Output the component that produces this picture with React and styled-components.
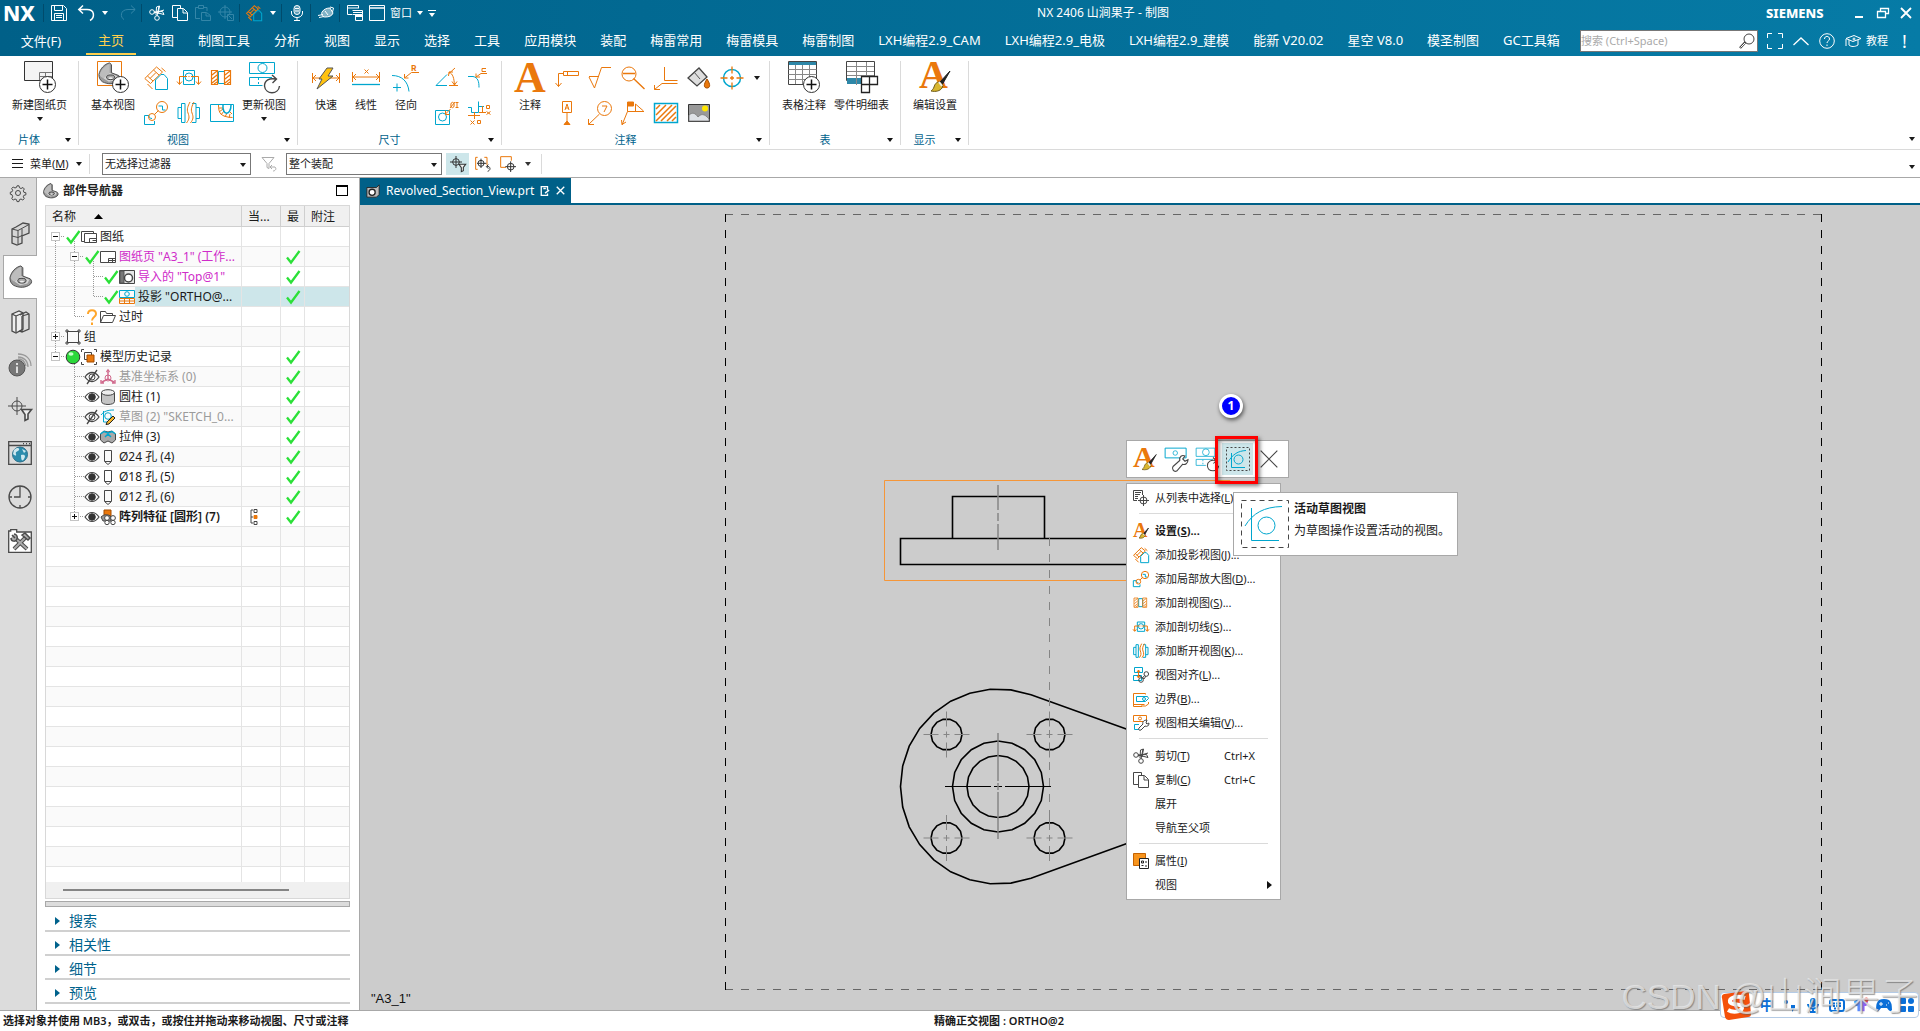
import React from 'react';
import styled, { createGlobalStyle, css } from 'styled-components';

const O = '#ea780c';
const B = '#00a6ce';
const D = '#464646';

const GlobalStyle = createGlobalStyle`
  * {
    box-sizing: border-box;
  }

  html,
  body,
  #root {
    height: 100%;
    margin: 0;
  }

  body {
    background: #fff;
    color: #1a1a1a;
    font: 11px/16px "Noto Sans", "Noto Sans CJK SC", sans-serif;
    overflow: hidden;
  }

  button,
  input,
  select {
    font: inherit;
    color: inherit;
    margin: 0;
  }

  button {
    background: none;
    border: 0;
    padding: 0;
  }

  svg {
    display: block;
    flex: none;
    overflow: visible;
  }
`;

const Brush = () => (
  <>
    <path d="M31 10L21 21l2 3z" fill="#222" stroke="#222" />
    <path d="M21 21c-4 0-5 2-6 5-.5 2-2 3-3 4 5 1 9 0 11-3l1-3z" fill="#d9b72f" stroke="#6d5a18" />
    <path d="M20 21l3 4" stroke="#eee" strokeWidth="2" />
  </>
);

const Letter = ({ x, y, size, children }) => (
  <text x={x} y={y} fontSize={size} fill={O} stroke="none" fontFamily="Liberation Serif, serif" fontWeight="bold">{children}</text>
);

const PlusDisc = () => (
  <>
    <circle cx="23.5" cy="23.5" r="8" fill="#fff" stroke="#333" />
    <path d="M23.5 18.5v10M18.5 23.5h10" stroke="#111" strokeWidth="1.5" />
  </>
);

const Part = () => (
  <>
    <path d="M1 14C2 8 7 2 13 1l2 2v9l8 3c2 2 2 4 0 6-5 4-12 4-18 1-3-2-4-5-4-8z" fill="#9a9a9a" stroke="#444" />
    <path d="M2 13.500C3.500 8.500 8 4 13 2v10l-7 6c-2-1-4-2-4-4.500z" fill="#bdbdbd" stroke="none" />
    <path d="M6 18l7-6 9 4-2 4-8 2z" fill="#d4d4d4" stroke="none" />
    <ellipse cx="14" cy="17" rx="4.500" ry="2.600" fill="#a8a8a8" stroke="#333" />
    <ellipse cx="14" cy="18" rx="2.300" ry="1" fill="#eee" stroke="none" />
  </>
);

// Each drawing is [grid size, shapes]
const glyphs = {
  save: [16, <path d="M.5.5h12l3 3v12H.5zM3.5 1v4.5h8V1M3.5 15V8.5h9V15M5 10.5h6M5 12.5h6" />],
  undo: [16, <path d="M5 .5L.8 4.5 5 8.500M1 4.5h8c8 0 8 8 3 11" strokeWidth="1.5" />],
  redo: [16, <path d="M11 .5l4.200 4L11 8.5M15 4.5H8c-8 0-8 8-4 10" />],
  cut: [16, <><circle cx="3" cy="7" r="2.3" /><circle cx="8" cy="13" r="2.3" /><path d="M5 8l10-3M8 11l2-10M5 7l10 2.500-1.500-3zM7 10L7.500 2l3-1-1.500 8" /></>],
  copy: [16, <path d="M5 12.500H.5V.5h8V3M5.5 3.5h6l4 4v8h-10zM11 4v4h4" />],
  paste: [16, <path d="M5 13.5H.5v-11h3M9 2.5h3V6M3.5.5h5v3h-5zM6.500 7.5h5l4 3v5h-9zM11 8v3h4" />],
  locate: [16, <><circle cx="7" cy="7" r="5" /><path d="M7 0v14M0 7h14M9.500 9.500h6v6h-6zM11 11l3 3" /></>],
  mic: [16, <><rect x="5" y=".5" width="6" height="9" rx="3" fill="currentColor" fillOpacity=".35" /><path d="M2.500 6v2c0 6 11 6 11 0V6M8 12.5V16M5 15.5h6M6 3.5h4M6 6h4" /></>],
  hand: [16, <><path d="M4 7c2-3 5-4 8-4l3 5c-1 3-4 4-8 4-3 0-4-3-3-5z" fill="currentColor" fillOpacity=".5" /><path d="M0 10.5l5-1M1 12.5l5-1M12 2l3.500 1-1 4M7 6l3 4" /></>],
  windows: [16, <><path d="M5 9.5H.5v-9h11v3M1 3h10M5.500 5.5h10v4M9 9.500h-3.500M6 7.500h9M8.500 15.5v-6h7v6z" /><path d="M9 11h6" strokeWidth="2" /></>],
  window: [16, <><path d="M.5.5h15v15H.5z" /><path d="M.5 3h15" strokeWidth="1.5" /></>],
  full: [16, <path d="M5 .5H.5V5M11 .5h4.500V5M5 15.5H.5V11M11 15.5h4.500V11" />],
  up: [16, <path d="M.5 12L8 5l7.500 7" strokeWidth="1.3" />],
  help: [16, <><circle cx="8" cy="8" r="7.3" /><path d="M5.500 6c0-3.500 5-3.500 5 0 0 2-2.500 2-2.500 4M8 11.5v1.500" /></>],
  cap: [16, <><path d="M1 5.500l8-3 7 3-8 3zM4 7v5c2 2 6 2 9 0V7M1 6v5M0 12h2" /><circle cx="9" cy="6" r="1" /></>],
  glass: [16, <><circle cx="10" cy="6" r="5" fill="#fff" stroke="#444" /><path d="M6.500 9L1 15" stroke="#444" strokeWidth="2.5" /><path d="M6 10l-4.500 4.500" stroke="#fff" /></>],
  min: [12, <path d="M2 10h8" strokeWidth="2" />],
  restore: [12, <path d="M3.500 4V1.500h8v5H9M.5 4.500h8v6h-8z" strokeWidth="1.3" />],
  close: [12, <path d="M1 1l10 10M11 1L1 11" strokeWidth="1.8" />],

  newSheet: [32, <><path d="M.5.5h28v19H.5z" fill="#f4f4f4" stroke="#333" /><path d="M15.500 19v-7.500H28M16 15.500h12M21.500 12v7" stroke="#777" /><PlusDisc /></>],
  baseView: [32, <><path d="M.5.5h24v24H.5z" stroke={O} /><g transform="translate(1 1) scale(.9)"><Part /></g><PlusDisc /></>],
  projected: [24, <><path stroke={O} d="M.8 12.500L12.500 1l6 5L6.500 17.500zM3.500 10l5.500 5M9.500 4l5.500 5M6 12.500l6-6M3.500 18l5 5M17.500 2l4 3.500" /><path stroke={B} d="M11.500 23.500V14L17 8.500h3l3.500 4v11z" /></>],
  cutLine: [24, <><path stroke={B} d="M6.500 4.500h11v14h-11z" /><circle cx="12" cy="11" r="4" stroke={B} /><path stroke={O} d="M2.500 18v-7.500H10M14 10.500h7.500V18M11.500 10.500h1M0 15.500l2.500 3 2.500-3M19 15.500l2.500 3 2.500-3" /></>],
  section: [24, <><path stroke={B} d="M8.500 5.500h6v12h-6z" /><path stroke={O} strokeWidth="1.2" d="M1.500 4.500h6v14h-6zM14.500 4.500h6v14h-6zM2 9l5-4M2 13l5-4M2 17l5-4M15 9l5-4M15 13l5-4M15 17l5-4M4 18l3-2M17 18l3-2" /></>],
  detail: [24, <><path stroke={B} d="M5 14.500H.5v9h10V20M5 14.500c0 2 1 3 3 3M14.500 5h4v4h3" /><circle cx="18" cy="6" r="5.5" stroke={O} /><circle cx="8" cy="16" r="3.5" stroke={O} /><path stroke={O} d="M10.500 13.500l4-4" /></>],
  broken: [24, <><path stroke={B} d="M4.500 6.500H1v11h3.500M4.500 2.500h3.500v19H4.500zM19 6.500h3.500v11H19M15 2.500h4v19h-4" /><path stroke={O} d="M9.500 22c3-4 3-6 1.500-10s0-7 2-11M13.500 22c3-4 3-6 1.500-10s0-7 2-11" /></>],
  breakout: [24, <><path stroke={B} d="M.5 3.500h23v17H.5z" /><path stroke={O} d="M8.500 4c0 8 2 12 14 12.500M9 7l4 0M9 11l4-3M11 14l3-4M15 16l2-4M19 17l1-4M22 13l-2-2" /><path stroke={B} strokeWidth="1.5" d="M13 4c-1 11 8 11 8 0" /></>],
  update: [32, <><path stroke={B} d="M1.500 1.500h25v11h-25zM24 16.500H1.500v8h13M10.500 17v2M10.500 21v2" /><circle cx="14.500" cy="7" r="4.5" stroke={B} /><path stroke={D} d="M31.500 25c-1 9-14 9-15 0 0-6 5-8 11-7M24 14l4.500 4-4 4" strokeWidth="1.4" /></>],
  quick: [32, <><path stroke={O} d="M2.500 12v10M29.500 12v10M3 17h26M6 14l-3 3 3 3M26 14l3 3-3 3" /><path d="M17 7h6l-5 8h5L7 28l5-10H9z" fill="#ffc20e" stroke="#555" /></>],
  linear: [32, <><path stroke={O} d="M2.500 11v10M29.500 11v10M3 16h26M6 13l-3 3 3 3M26 13l3 3-3 3M14.500 8.500l4 4M18.500 8.500l-4 4" /><path stroke={B} d="M2 23.500h28" strokeWidth="1.3" /></>],
  radial: [32, <><path stroke={O} d="M29 11.500h-7.500L14.500 17M14.500 13v4h4" /><text x="21" y="10" fontSize="9" fontFamily="Liberation Mono, monospace" fill={O} stroke="none" fontWeight="bold">R</text><path stroke={B} d="M2 14.500c10 0 16 6 17 16M3 26.500h8M7 22.500v8" /></>],
  angular: [24, <><path stroke={B} d="M12 8.500L1 19.500h11" /><path stroke={O} d="M14 7.500L20 2M14 19.500h9M14 6c4 2 5 6 5.500 13M13.500 10l.5-4h4M17 15.500l2.500 3.500 2.500-3.500" /></>],
  chamfer: [24, <><path stroke={B} d="M0 10.500h5c5 1 6 5 6 11" /><path stroke={O} d="M19 7.500h-6L8 11M8 7.500V11h4M18 2.500h-4v3h4" /></>],
  callout: [24, <><path stroke={B} d="M.5 9.500h14v14H.5z" /><circle cx="7.500" cy="16" r="4" stroke={B} /><path stroke={O} d="M15.500 8l-5 5M10.500 9.500v4h4M15 7l5-6M20.500 1.500h3M20.500 6.500h3M22 2v4" /><ellipse cx="17.500" cy="4" rx="1.7" ry="2.7" stroke={O} /></>],
  ordinate: [24, <><path stroke={B} d="M0 6.500h3.500v5h7v-11M10.500 5.500H16" /><path stroke={O} d="M11 11.500h7M14.500 5v7M18.500 4.500h3v3h-3zM18.500 10.500l4 3M22.500 10.500l-4 3M0 14.500h12M6.500 11v7M2.500 19.500l4 4M6.500 19.500l-4 4M9.500 19.500h3v3h-3z" /></>],
  note: [32, <Letter x="0" y="31" size={44}>A</Letter>],
  leader: [24, <path stroke={O} d="M8.500 5.500h15v4h-15zM12.500 6v3M8 7.500H3.500v13M.5 17l3 3.500 3-3.500" />],
  surface: [24, <path stroke={O} d="M1 10.500h10M1 11l5.500 11L13.500 1.500H23" />],
  zoomNote: [24, <><circle cx="8" cy="8" r="7" stroke={O} /><path stroke={O} d="M2 7.500h12M12.500 12.500L23.500 23" strokeWidth="1.4" /></>],
  axis: [24, <path stroke={O} d="M10.500 1v13.500h13M23.500 17.500H8L.5 23.500M.5 19v4.500H6" />],
  bucket: [24, <><path d="M12 2l8 9-10 9L1 12z" fill="#ddd" stroke="#444" strokeWidth="1.3" /><path d="M7 6l6 7" stroke="#555" /><path d="M20 13c-4 6-3 9 0 9s4-3 0-9z" fill={O} stroke="#a34c00" /></>],
  centerMark: [24, <><circle cx="12" cy="12" r="8.5" stroke={B} strokeWidth="1.5" /><path stroke={O} d="M12 .5v7M12 16.500v7M.5 12h7M16.500 12h7M12 10v4M10 12h4" strokeWidth="1.3" /></>],
  datum: [24, <><path stroke={O} d="M7.500.5h9v11h-9zM12 12v8" /><path stroke={O} fill={O} d="M12 20l-3 3.500h6z" /><path stroke={O} d="M10 9l2-6 2 6M10.500 7h3" /></>],
  balloon: [24, <><circle cx="16.500" cy="7.500" r="7" stroke={O} /><path stroke={O} d="M11.500 13L.5 23.500M.5 18v5.500H6M14 5h5l-3 6" /></>],
  weld: [24, <><path stroke={O} d="M1 24l5.500-13.500H23M6.500 10.500V1M.5 19l.5 4.500 4-2.500M14.500 10V3l8 7" /><path fill={O} stroke={O} d="M6.500 1h6v4h-6z" /></>],
  hatch: [24, <><path stroke={B} d="M.5 2.500h23v19H.5z" strokeWidth="1.5" /><path stroke={O} d="M2 8l4-4M2 14L12 4M2 20L18 4M7 20L22 5M13 20l9-9M18 20l4-4" strokeWidth="1.5" /></>],
  image: [24, <><path d="M1.500 3.500h21v17h-21z" fill="#999" stroke="#333" /><path d="M2 20v-6c4-3 6-2 9 2 3-3 6-4 11 2v2z" fill="#dfe2e6" stroke="#777" strokeWidth=".8" /><circle cx="18" cy="7.500" r="3" fill="#ffe600" stroke="none" /></>],
  tableNote: [32, <><path d="M.5.5h28v23H.5z" fill="#fff" stroke="#444" /><path d="M1 1h27v3H1z" fill="#2d87a8" stroke="none" /><path d="M.5 8.500h28M.5 13.500h28M.5 18.500h28M7.500 4v19M14.500 4v19M21.500 4v19" stroke="#888" /><PlusDisc /></>],
  partsList: [32, <><path d="M.5.5h28v19H.5z" fill="#fff" stroke="#444" /><path d="M1 17h15v6H1z" fill="#2d87a8" stroke="none" /><path d="M1 5.500h27M1 10.500h27M1 14.500h27M10.500 1v23M20.500 1v14" stroke="#888" /><path d="M15.500 15.500h16v8h-16zM23.500 15.500v16h-8v-16" fill="#fff" stroke="#222" strokeWidth="1.3" /></>],
  editSettings: [32, <><Letter x="0" y="27" size={40}>A</Letter><Brush /></>],
  editView: [32, <><path stroke={B} d="M1.500 1.500h28v13h-28z" strokeWidth="1.3" /><circle cx="15" cy="8" r="3" stroke={B} /><path d="M12 26l9-8c-1-5 3-8 7-6l-3 4 3 3 4-2c0 5-4 7-7 6l-8 9c-4 2-7-3-5-6z" fill="#fff" stroke={D} strokeWidth="1.5" /></>],
  cross: [24, <path d="M2 2l20 20M22 2L2 22" stroke={D} strokeWidth="1.4" />],
  activeView: [24, <><path d="M.5.5h23v23H.5z" stroke={D} strokeDasharray="2 2" /><path stroke={B} d="M5.500 6v14.500H19M2 15C7 7 12 4 20 3.500" /><circle cx="12.500" cy="12.500" r="4.5" stroke={B} /></>],
  activeViewLarge: [48, <><path d="M.5.5h47v47H.5z" stroke={D} strokeDasharray="5 4" /><path stroke={B} d="M10.500 8v32.500H38M4 26C12 13 23 7 41 6.500" /><circle cx="25.500" cy="25.500" r="8.5" stroke={B} /></>],

  filterReset: [16, <><path d="M1 1.500h12l-5 6v5l-2-1v-4z" /><path d="M9 11h5c2 2 0 4-2 4M11 9l-2 2 2 2" /></>],
  targetFilter: [24, <><circle cx="9" cy="9" r="5" /><path d="M9 0v18M0 9h18" /><path d="M13.500 12.500h10l-3.500 4.500v5l-3 1.500v-6z" fill="#eee" strokeWidth="1.6" /></>],
  targetBracket: [24, <><path stroke={O} strokeWidth="1.5" d="M4 2H1v18h3M14 2h4v12" /><circle cx="9" cy="11" r="4.5" /><path d="M9 4v14M3 11h14M18 16h3c3 3 1 6-2 7M20 13l-3 3 3 3" strokeWidth="1.5" /></>],
  targetSquare: [24, <><path stroke={O} strokeWidth="1.5" d="M9 17H1V1h16v6" /><circle cx="16" cy="16" r="5" strokeWidth="1.5" /><path d="M16 8v16M8 16h16" strokeWidth="1.5" /></>],
  list: [16, <><path d="M4 10.500H.5V.5h9V5M2 2.500h6M2 4.500h5M2 6.500h3M2 8.500h3" /><circle cx="10.500" cy="10.500" r="3.5" /><path d="M10.500 5v11M5 10.500h11" /></>],
  align: [16, <><path stroke={B} d="M1.500.5h8v5h-8zM.5 8.500h8v5h-8z" /><path stroke={O} d="M5.500 3v8M4 5l1.500-2L7 5M4 9l1.500 2L7 9" /><circle cx="8" cy="13" r="2.3" /><circle cx="13.300" cy="7" r="2.3" /><path d="M9.500 11l2-2.500M6 8l5 4 2-3" /></>],
  border: [16, <><path stroke={O} d="M9 15.500H.5V2.500h12v1M15.500 11v2l-3 2H8M.5 13.500h11" /><path stroke={B} d="M3.500 5.500h11l1 2-3 3h-9z" /><circle cx="11" cy="8" r="1.5" stroke={B} /></>],
  viewEdit: [16, <><path stroke={O} d="M.5.5h13v6H.5z" /><circle cx="7" cy="3.500" r="1.5" stroke={O} /><path stroke={B} d="M6 9.500H1.500v5H6" /><path d="M6 13l4-4c-1-2 1-4 4-4l-1 3 1 1 2-1c0 3-2 4-4 3l-4 4c-2 1-3-1-2-2z" fill="#fff" /></>],
  props: [16, <><path d="M.5.5h12v12H.5z" fill="#f7941d" stroke="#c56200" /><path d="M6.500 5.500h9v10h-9z" fill="#fff" stroke="#222" /><path d="M8.500 8h2v2h-2zM12 9h2M8.500 12.500h2M12 13h2" stroke="#222" /></>],

  gear: [16, <><path d="M7 .8h2l.5 2 1.500.7 2-1 1.300 1.500-1 1.800.6 1.500 2 .5v2l-2 .5-.6 1.500 1 1.800-1.500 1.400-1.800-1-1.500.6-.5 2H7l-.5-2-1.500-.6-1.800 1-1.500-1.400 1-1.800L2 9.700l-1.700-.5v-2L2 6.800l.7-1.500-1-1.800L3.200 2l1.800 1 1.500-.6z" /><circle cx="8" cy="8" r="2.5" /></>],
  cubes: [24, <><path d="M4 8l4-2 7-4 6 1v9l-7 3v7l-5 2-5-2z" fill="#d5d5d5" strokeWidth="1.3" /><path d="M4 8l6 1.500 11-6M10 9.500V23M4 15l6 1.500 4-2M14 8v7" /></>],
  part: [26, <Part />],
  books: [24, <><path d="M4 5l7-3 4 2v16l-7 4-4-2z" fill="#eee" strokeWidth="1.3" /><path d="M8 7l7-3M8 7v16M4 5l4 2M12 6l6-3 3 2v15l-7 3-3-1M14 7l7-2M14 7v16" fill="none" strokeWidth="1.3" /></>],
  info: [24, <><circle cx="9" cy="15" r="8" fill="#777" stroke="#555" /><path d="M9 13.500V20M9 10v2" stroke="#fff" strokeWidth="1.5" /><path d="M10 4c6 0 10 4 10 10M10 1c8 0 13 5 13 12M10 6c4 0 7 3 8 7" stroke="#999" strokeWidth="1.3" /></>],
  globe: [24, <><path d="M.7.7h22.600v22.600H.7zM1 4.500h22M15 2.700h1M18 2.700h1M21 2.700h1" strokeWidth="1.3" /><circle cx="12" cy="13.500" r="7.5" fill="#2b8cad" stroke="#2b6f8a" /><path d="M6 9c3-3 6-2 5 0s-4 1-3 4-2 1-3 0zM13 14c4-1 5 1 3 4s-3 1-3-4zM14 8l4 2-2 2z" fill="#cde8f0" stroke="none" /></>],
  clock: [24, <><circle cx="12" cy="12" r="11" strokeWidth="1.3" /><path d="M12 4v8H6M12 1v3M12 20v3M1 12h3M20 12h3" strokeWidth="1.3" /></>],
  tools: [24, <><path d="M.7 23.300V2h2V.7h6V3h14.600v20.300z" fill="#fff" strokeWidth="1.3" /><path d="M7 9l12 11M18 8L6 20" strokeWidth="4" /><path d="M7 9l12 11M18 8L6 20" stroke="#aaa" strokeWidth="2" /><path d="M4 6l3 3M3 9c0 4 5 4 6 1s-1-5-3-5M14 6l3-2 5 5-2 2z" strokeWidth="1.5" fill="#aaa" /></>],

  check: [16, <path d="M2 8.500l4 5L14.500 2" stroke="#2be038" strokeWidth="2.3" />],
  question: [16, <path d="M4 5c0-5 8-5 8 0 0 3-4 3-4 6.500M8 13.500V16" stroke="#ffa62b" strokeWidth="2" />],
  ball: [16, <><circle cx="8" cy="8" r="6.8" fill="#2bd83a" stroke="#333" /><ellipse cx="6" cy="5" rx="2.5" ry="1.8" fill="#c6ffca" stroke="none" /></>],
  eye: [16, <><path d="M1 8c4-6 10-6 14 0-4 6-10 6-14 0z" strokeWidth="1.2" /><circle cx="8" cy="8" r="3.3" fill="#333" stroke="#333" /></>],
  eyeOff: [16, <><path d="M1 8c4-6 10-6 14 0-4 6-10 6-14 0zM13 1L3 15" strokeWidth="1.3" /><circle cx="8" cy="8" r="3" /></>],
  sheets: [16, <><path d="M3 12.500H.5v-10h12V5" /><path d="M3.500 4.500h12v9h-12zM8.500 13v-3.500h6.500M11.500 11.500h4" /></>],
  sheet: [16, <path d="M.5 2.500h15v11H.5zM8.500 13V9.500H15M9 11.500h6M12.500 10v3" fill="#fff" />],
  topView: [16, <><path d="M.5 1.500h15v13H.5z" fill="#e6e6e6" /><path d="M1 2h4v12H1z" fill="#777" stroke="#555" /><circle cx="9.500" cy="9" r="4" fill="#fff" strokeWidth="1.5" /></>],
  ortho: [16, <><path stroke={B} d="M.5 1.500h15v7H.5z" /><circle cx="8" cy="5" r="2.3" stroke={B} /><path stroke={O} d="M.5 9.500h15v5H.5zM5.500 10v4M10.500 10v4M1 12h14" /></>],
  folder: [16, <path d="M.5 13.500v-11h5l1 2h6v2M.5 13.500l3-7h12l-3 7z" />],
  group: [16, <><path d="M2.500 2.500h11v11h-11z" /><path d="M1 1h2v2H1zM13 1h2v2h-2zM1 13h2v2H1zM13 13h2v2h-2z" /></>],
  history: [16, <><path d="M.5 3V.5H3M13 .5h2.500V3M.5 13v2.500H3M13 15.500h2.500V13" /><path d="M3.500 3.500h7v7h-7z" fill="#fff" /><path d="M6 6h7v7H6z" fill={O} stroke="#a34c00" /></>],
  csys: [16, <><path stroke="#d0698c" d="M8 3v7l-6 3M8 10l6 3M6.500 3L8 1l1.500 2M1 11v3h3M12 14h3v-3" strokeWidth="1.4" /><circle cx="8" cy="9" r="3" stroke="#d0698c" /></>],
  cylinder: [16, <><path d="M1.500 3.500v9c0 4 13 4 13 0v-9" fill="#c4c4c4" /><ellipse cx="8" cy="3.500" rx="6.5" ry="2.8" fill="#eee" /></>],
  sketch: [16, <><path stroke={B} d="M3.500 2v11H9M1 6C4 2 8 1 14 1" /><circle cx="8" cy="7" r="3.3" stroke={B} /><path d="M7 13l6-6 2 2-6 6-3 .5z" fill="#f3b32c" stroke="#222" /></>],
  extrude: [16, <><path d="M.5 5L4 2l4 1 4-1 3.500 3v6L12 14l-4-2-4 2-3.500-3z" fill="#a9a9a9" /><path stroke={B} d="M.5 5L4 2.500 8 4l4-1.500L15.500 5M5 8l3-3 3 3" strokeWidth="1.5" /></>],
  hole: [16, <path d="M4.500 1.500h7v11l-3.500 3-3.500-3zM5 12.500h6" />],
  pattern: [16, <><path d="M4 1h7v6H4z" fill={O} stroke="#a34c00" /><path d="M1 8c3-3 8-3 10 0v4H3z" fill="#999" /><circle cx="7" cy="9" r="2.4" fill="#fff" /><circle cx="13" cy="9" r="2.4" fill="#fff" /><circle cx="7" cy="13.500" r="2.2" fill="#fff" /><circle cx="13" cy="13.500" r="2.2" fill="#fff" /></>],
  tree: [16, <><path d="M5 1H3v13h2M3 8h2" /><path d="M6 .5h3v3H6zM6 12.500h3v3H6z" /><path d="M6 6.500h3v3H6z" fill={O} stroke={O} /></>],
  tabPart: [16, <><path d="M1 4h11l3-3v11l-3 3H1z" fill="#bbb" stroke="#222" /><circle cx="7" cy="9.500" r="3.5" fill="#fff" stroke="#222" strokeWidth="1.5" /></>],
  modified: [12, <path d="M9 5V.8H1.500v10.500H9V9M4 3h3M11 5L6 8.500" strokeWidth="1.6" />],
};

const Icon = ({ name, size, ...rest }) => {
  const [grid, shapes] = glyphs[name];
  const px = size || grid;
  return (
    <svg width={px} height={px} viewBox={`0 0 ${grid} ${grid}`} fill="none" stroke="currentColor" aria-hidden="true" {...rest}>
      {shapes}
    </svg>
  );
};

const Caret = () => (
  <svg width="6" height="4" viewBox="0 0 6 4" fill="currentColor" aria-hidden="true"><path d="M0 0h6L3 4z" /></svg>
);

const App = () => (
  <>
    <GlobalStyle />
    <Shell>
      <Header>
        <TitleRow>
          <QuickAccess />
          <Title>NX 2406 山涧果子 - 制图</Title>
          <WindowControls>
            <Brand>SIEMENS</Brand>
            <button type="button" aria-label="最小化"><Icon name="min" /></button>
            <button type="button" aria-label="还原"><Icon name="restore" /></button>
            <button type="button" aria-label="关闭"><Icon name="close" /></button>
          </WindowControls>
        </TitleRow>
        <TabRow>
          <FileButton type="button">文件(F)</FileButton>
          {ribbonTabs.map((tab) => (
            <RibbonTab key={tab} type="button" $active={tab === '主页'}>{tab}</RibbonTab>
          ))}
          <Spacer />
          <SearchBox>
            <input aria-label="搜索" placeholder="搜索 (Ctrl+Space)" />
            <Icon name="glass" />
          </SearchBox>
          <HelpTools>
            <button type="button" aria-label="全屏"><Icon name="full" /></button>
            <button type="button" aria-label="收起功能区"><Icon name="up" /></button>
            <button type="button" aria-label="帮助"><Icon name="help" /></button>
            <button type="button">
              <Icon name="cap" />
              教程
            </button>
            <Alert type="button">!</Alert>
          </HelpTools>
        </TabRow>
      </Header>
      <RibbonBar />
      <SelectionBar />
      <Workspace>
        <ResourceBar>
          {resources.map(([name, label]) => (
            <ResourceButton key={name} type="button" aria-label={label} $small={name === 'gear'} $active={name === 'part'}>
              <Icon name={name} size={name === 'gear' ? 16 : 24} />
            </ResourceButton>
          ))}
        </ResourceBar>
        <Navigator />
        <Viewport />
      </Workspace>
      <Status>
        <span>选择对象并使用 MB3，或双击，或按住并拖动来移动视图、尺寸或注释</span>
        <span>精确正交视图 : ORTHO@2</span>
      </Status>
      <ImeBar />
      <Watermark>
        CSDN @
        <span>山涧果子</span>
      </Watermark>
    </Shell>
  </>
);

const ribbonTabs = ['主页', '草图', '制图工具', '分析', '视图', '显示', '选择', '工具', '应用模块', '装配', '梅雷常用', '梅雷模具', '梅雷制图', 'LXH编程2.9_CAM', 'LXH编程2.9_电极', 'LXH编程2.9_建模', '能新 V20.02', '星空 V8.0', '模圣制图', 'GC工具箱'];

const resources = [
  ['gear', '设置'],
  ['cubes', '装配导航器'],
  ['part', '部件导航器'],
  ['books', '重用库'],
  ['info', '信息'],
  ['targetFilter', '选择'],
  ['globe', '浏览器'],
  ['clock', '历史记录'],
  ['tools', '工具'],
];

const QuickAccess = () => (
  <QuickBar>
    <Logo>NX</Logo>
    <Rule />
    <QuickButton type="button" aria-label="保存"><Icon name="save" /></QuickButton>
    <QuickButton type="button" aria-label="撤销" $width={46}>
      <Icon name="undo" />
      <Caret />
    </QuickButton>
    <QuickButton type="button" aria-label="重做" $dim><Icon name="redo" /></QuickButton>
    <Rule />
    <QuickButton type="button" aria-label="剪切"><Icon name="cut" /></QuickButton>
    <QuickButton type="button" aria-label="复制"><Icon name="copy" /></QuickButton>
    <QuickButton type="button" aria-label="粘贴" $dim><Icon name="paste" /></QuickButton>
    <QuickButton type="button" aria-label="定位" $dim><Icon name="locate" /></QuickButton>
    <Rule />
    <QuickButton type="button" aria-label="投影视图" $width={36}>
      <Icon name="projected" size={16} strokeWidth="1.6" />
      <Caret />
    </QuickButton>
    <Rule />
    <QuickButton type="button" aria-label="语音"><Icon name="mic" /></QuickButton>
    <Rule />
    <QuickButton type="button" aria-label="触控"><Icon name="hand" /></QuickButton>
    <Rule />
    <QuickButton type="button" aria-label="切换窗口"><Icon name="windows" /></QuickButton>
    <QuickButton type="button" $width={60} $gap={5}>
      <Icon name="window" />
      窗口
      <Caret />
    </QuickButton>
    <QuickButton type="button" aria-label="自定义" $width={12}>
      <svg width="8" height="7" viewBox="0 0 8 7" fill="currentColor"><path d="M0 0h8v1H0zM1 3h6L4 7z" /></svg>
    </QuickButton>
  </QuickBar>
);

const groups = [
  { title: '片体', items: [{ big: 'newSheet', label: '新建图纸页', menu: true }] },
  {
    title: '视图',
    items: [
      { big: 'baseView', label: '基本视图' },
      { small: ['projected', 'cutLine', 'section', 'detail', 'broken', 'breakout'], cols: 3 },
      { big: 'update', label: '更新视图', menu: true },
    ],
  },
  {
    title: '尺寸',
    gap: 8,
    end: 5,
    items: [
      { big: 'quick', label: '快速' },
      { big: 'linear', label: '线性' },
      { big: 'radial', label: '径向' },
      { small: ['angular', 'chamfer', 'callout', 'ordinate'], cols: 2 },
    ],
  },
  {
    title: '注释',
    end: 7,
    items: [
      { big: 'note', label: '注释' },
      { small: ['leader', 'surface', 'zoomNote', 'axis', 'bucket', 'centerMark', 'datum', 'balloon', 'weld', 'hatch', 'image'], cols: 6, more: true },
    ],
  },
  {
    title: '表',
    gap: 8,
    items: [
      { big: 'tableNote', label: '表格注释' },
      { big: 'partsList', label: '零件明细表' },
    ],
  },
  { title: '显示', items: [{ big: 'editSettings', label: '编辑设置' }] },
];

const RibbonBar = () => (
  <Ribbon>
    {groups.map((group) => (
      <Group key={group.title}>
        <GroupBody $gap={group.gap} $end={group.end}>
          {group.items.map((item) => (item.big ? (
            <BigButton key={item.big} type="button">
              <Icon name={item.big} />
              {item.label}
              {item.menu && <Caret />}
            </BigButton>
          ) : (
            <React.Fragment key={item.small[0]}>
              <SmallGrid $cols={item.cols}>
                {item.small.map((name) => (
                  <button key={name} type="button" aria-label={name}><Icon name={name} /></button>
                ))}
              </SmallGrid>
              {item.more && <MoreButton type="button" aria-label="更多"><Caret /></MoreButton>}
            </React.Fragment>
          )))}
        </GroupBody>
        <GroupFooter>
          <span>{group.title}</span>
          <button type="button" aria-label={`${group.title}选项`}><Caret /></button>
        </GroupFooter>
      </Group>
    ))}
    <BarEnd type="button" aria-label="功能区选项"><Caret /></BarEnd>
  </Ribbon>
);

const SelectionBar = () => (
  <FilterBar>
    <MenuButton type="button">
      <svg width="11" height="10" viewBox="0 0 11 10" stroke="currentColor"><path d="M0 .5h11M0 4.500h11M0 8.500h11" /></svg>
      <span>
        菜单(
        <u>M</u>
        )
      </span>
      <Caret />
    </MenuButton>
    <Divider />
    <SelectWrap $width={149}>
      <select aria-label="类型过滤器"><option>无选择过滤器</option></select>
      <Caret />
    </SelectWrap>
    <ToolToggle type="button" aria-label="重置过滤器" $dim><Icon name="filterReset" /></ToolToggle>
    <SelectWrap $width={156}>
      <select aria-label="选择范围"><option>整个装配</option></select>
      <Caret />
    </SelectWrap>
    <ToolSet>
      <ToolToggle type="button" aria-label="选择过滤器" $on><Icon name="targetFilter" size={16} strokeWidth="1.5" /></ToolToggle>
      <ToolToggle type="button" aria-label="重置选择"><Icon name="targetBracket" size={16} strokeWidth="1.5" /></ToolToggle>
      <ToolToggle type="button" aria-label="选择框"><Icon name="targetSquare" size={16} /></ToolToggle>
      <ToolMore type="button" aria-label="更多选择"><Caret /></ToolMore>
    </ToolSet>
    <Divider />
    <BarEnd type="button" aria-label="选择条选项"><Caret /></BarEnd>
  </FilterBar>
);

// lines: [level, fromY, toY] of the dotted branches that cross the row
const treeRows = [
  { text: '图纸', depth: 0, box: '-', state: 'check', icon: 'sheets', lines: [[0, 14, 20], [1, 14, 20]] },
  { text: '图纸页 "A3_1" (工作...', depth: 1, box: '-', state: 'check', icon: 'sheet', tone: 'pink', ok: true, lines: [[0, 0, 20], [1, 0, 5], [1, 14, 20], [2, 14, 20]] },
  { text: '导入的 "Top@1"', depth: 2, state: 'check', icon: 'topView', tone: 'pink', ok: true, lines: [[0, 0, 20], [1, 0, 20], [2, 0, 20]] },
  { text: '投影 "ORTHO@...', depth: 2, state: 'check', icon: 'ortho', ok: true, selected: true, lines: [[0, 0, 20], [1, 0, 20], [2, 0, 10]] },
  { text: '过时', depth: 1, state: 'question', icon: 'folder', lines: [[0, 0, 20], [1, 0, 10]] },
  { text: '组', depth: 0, box: '+', icon: 'group', lines: [[0, 0, 5], [0, 14, 20]] },
  { text: '模型历史记录', depth: 0, box: '-', state: 'ball', icon: 'history', ok: true, lines: [[0, 0, 5], [1, 15, 20]] },
  { text: '基准坐标系 (0)', depth: 1, state: 'eyeOff', icon: 'csys', tone: 'dim', ok: true, lines: [[1, 0, 20]] },
  { text: '圆柱 (1)', depth: 1, state: 'eye', icon: 'cylinder', ok: true, lines: [[1, 0, 20]] },
  { text: '草图 (2) "SKETCH_0...', depth: 1, state: 'eyeOff', icon: 'sketch', tone: 'dim', ok: true, lines: [[1, 0, 20]] },
  { text: '拉伸 (3)', depth: 1, state: 'eye', icon: 'extrude', ok: true, lines: [[1, 0, 20]] },
  { text: 'Ø24 孔 (4)', depth: 1, state: 'eye', icon: 'hole', ok: true, lines: [[1, 0, 20]] },
  { text: 'Ø18 孔 (5)', depth: 1, state: 'eye', icon: 'hole', ok: true, lines: [[1, 0, 20]] },
  { text: 'Ø12 孔 (6)', depth: 1, state: 'eye', icon: 'hole', ok: true, lines: [[1, 0, 20]] },
  { text: '阵列特征 [圆形] (7)', depth: 1, box: '+', state: 'eye', icon: 'pattern', tone: 'bold', ok: true, extra: true, lines: [[1, 0, 5]] },
];

const blankRows = Array.from({ length: 18 }, (_, i) => i);

const Branch = ({ depth, box, lines }) => {
  const x = 9.5 + depth * 19;
  return (
    <svg width={19 + depth * 19} height="19" viewBox={`0 0 ${19 + depth * 19} 19`} fill="none" aria-hidden="true">
      <g stroke="#999" strokeDasharray="1 1">
        {lines.map(([level, from, to]) => (
          <path key={`${level}-${from}`} d={`M${9.5 + level * 19} ${from}V${to}`} />
        ))}
        <path d={`M${box ? x + 5.5 : x + 0.5} 9.500H${x + 9.5}`} />
      </g>
      {box && (
        <>
          <rect x={x - 4} y="5.5" width="8" height="8" fill="#fff" stroke="#c4c4c4" />
          <path d={`M${x - 2.5} 9.500h5${box === '+' ? `M${x} 7v5` : ''}`} stroke="#111" />
        </>
      )}
    </svg>
  );
};

const Navigator = () => (
  <Panel>
    <PanelTitle>
      <Icon name="part" size={16} strokeWidth="1.5" />
      <h2>部件导航器</h2>
      <button type="button" aria-label="最大化" />
    </PanelTitle>
    <TreeFrame>
      <TreeClip>
        <TreeTable>
          <colgroup>
            <col />
            <col width="39" />
            <col width="24" />
            <col width="44" />
          </colgroup>
          <thead>
            <tr>
              <th>
                名称
                <svg width="9" height="5" viewBox="0 0 9 5"><path d="M0 5h9L4.500 0z" /></svg>
              </th>
              <th>当...</th>
              <th>最</th>
              <th>附注</th>
            </tr>
          </thead>
          <tbody>
            {treeRows.map((row) => (
              <TreeRow key={row.text} $selected={row.selected}>
                <td>
                  <NameCell $tone={row.tone}>
                    <Branch depth={row.depth} box={row.box} lines={row.lines} />
                    {row.state && <Icon name={row.state} color={D} />}
                    <Icon name={row.icon} color={D} />
                    <span>{row.text}</span>
                  </NameCell>
                </td>
                <td>{row.extra && <Icon name="tree" color={D} />}</td>
                <td>{row.ok && <Icon name="check" />}</td>
                <td />
              </TreeRow>
            ))}
            {blankRows.map((n) => (
              <TreeRow key={n}>
                <td />
                <td />
                <td />
                <td />
              </TreeRow>
            ))}
          </tbody>
        </TreeTable>
      </TreeClip>
      <ScrollTrack><div /></ScrollTrack>
    </TreeFrame>
    <Splitter />
    {['搜索', '相关性', '细节', '预览'].map((name) => (
      <Section key={name} type="button">
        <svg width="5" height="8" viewBox="0 0 5 8" fill="currentColor"><path d="M0 0l5 4-5 4z" /></svg>
        {name}
      </Section>
    ))}
  </Panel>
);

const ring = (cx, cy, r, n, from = 0, to = 360) => (
  Array.from({ length: n + 1 }, (_, i) => {
    const a = ((from + ((to - from) * i) / n) * Math.PI) / 180;
    return `${(cx + r * Math.cos(a)).toFixed(1)},${(cy - r * Math.sin(a)).toFixed(1)}`;
  }).join(' ')
);

const holes = [[946.5, 734.5], [1049.5, 734.5], [946.5, 838], [1049.5, 838]];

const Sheet = () => (
  <Drawing viewBox="360 205 1560 805" preserveAspectRatio="xMinYMin meet" fill="none">
    <path d="M725 214.500H1821.500M725 989.500H1821.500" stroke="#666" strokeDasharray="8 8" />
    <path d="M725.500 214V990M1821.500 214V990" stroke="#000" strokeDasharray="8 8" />
    <path d="M884.500 480.500H1230V580.500H884.500z" stroke="#f59638" />
    <g stroke="#000" strokeWidth="1.6">
      <path d="M952.500 538V496.500H1044.500V538M1200 538.500H900.500V564.500H1200" />
      <polyline points={`1200,755.500 ${ring(998, 786.5, 97.5, 18, 70.2, 289.8)} 1200,817`} />
      <polyline points={ring(998, 786.5, 45.5, 20)} />
      <polyline points={ring(998, 786.5, 31, 20)} />
      {holes.map(([x, y]) => <polyline key={`${x}-${y}`} points={ring(x, y, 15.5, 14)} />)}
    </g>
    <path d="M945 786.500h46M994 786.500h8M1005 786.500h46" stroke="#000" />
    <g stroke="#858585">
      <path d="M998 485v25M998 513v8M998 524v26M998 733v48M998 783v7M998 792v47" strokeWidth="1.5" />
      <path d="M1049.500 538V822" strokeDasharray="8 8" />
      {holes.map(([x, y]) => (
        <path key={`${x}-${y}`} d={`M${x - 23} ${y}h15m5 0h6m5 0h15M${x} ${y - 23}v15m0 5v6m0 5v15`} />
      ))}
    </g>
    <text x="371" y="1003" fontSize="13" fontFamily="Liberation Sans, sans-serif" fill="#111">&quot;A3_1&quot;</text>
  </Drawing>
);

const menuItems = [
  { icon: 'list', text: '从列表中选择', mark: 'L', dots: true },
  null,
  { icon: 'editSettings', text: '设置', mark: 'S', dots: true, bold: true },
  { icon: 'projected', text: '添加投影视图', mark: 'J', dots: true },
  { icon: 'detail', text: '添加局部放大图', mark: 'D', dots: true },
  { icon: 'section', text: '添加剖视图', mark: 'S', dots: true },
  { icon: 'cutLine', text: '添加剖切线', mark: 'S', dots: true },
  { icon: 'broken', text: '添加断开视图', mark: 'K', dots: true },
  { icon: 'align', text: '视图对齐', mark: 'L', dots: true },
  { icon: 'border', text: '边界', mark: 'B', dots: true },
  { icon: 'viewEdit', text: '视图相关编辑', mark: 'V', dots: true },
  null,
  { icon: 'cut', text: '剪切', mark: 'T', keys: 'Ctrl+X' },
  { icon: 'copy', text: '复制', mark: 'C', keys: 'Ctrl+C' },
  { text: '展开' },
  { text: '导航至父项' },
  null,
  { icon: 'props', text: '属性', mark: 'I' },
  { text: '视图', sub: true },
];

const Viewport = () => (
  <ViewArea>
    <FileTabs>
      <FileTab>
        <Icon name="tabPart" size={14} />
        <span>Revolved_Section_View.prt</span>
        <Icon name="modified" size={10} />
        <button type="button" aria-label="关闭文件"><Icon name="close" size={9} strokeWidth="3" /></button>
      </FileTab>
    </FileTabs>
    <Canvas>
      <Sheet />
      <MiniBar>
        <button type="button" aria-label="设置"><Icon name="editSettings" size={24} /></button>
        <button type="button" aria-label="编辑视图"><Icon name="editView" size={24} /></button>
        <button type="button" aria-label="更新视图"><Icon name="update" size={24} /></button>
        <MiniActive type="button" aria-label="活动草图视图"><Icon name="activeView" /></MiniActive>
        <button type="button" aria-label="关闭"><Icon name="cross" size={20} /></button>
      </MiniBar>
      <ContextMenu>
        {menuItems.map((item, i) => (item ? (
          <MenuItem key={item.text} type="button" $bold={item.bold}>
            <MenuIcon>{item.icon && <Icon name={item.icon} size={16} color={D} strokeWidth={glyphs[item.icon][0] > 16 ? 1.5 : 1} />}</MenuIcon>
            <span>
              {item.text}
              {item.mark && (
                <>
                  (
                  <u>{item.mark}</u>
                  )
                </>
              )}
              {item.dots && '...'}
            </span>
            {item.keys && <kbd>{item.keys}</kbd>}
            {item.sub && <SubArrow width="5" height="8" viewBox="0 0 5 8"><path d="M0 0l5 4-5 4z" /></SubArrow>}
          </MenuItem>
        ) : <MenuRule key={`rule-${i}`} />))}
      </ContextMenu>
      <Tooltip role="tooltip">
        <Icon name="activeViewLarge" />
        <div>
          <strong>活动草图视图</strong>
          <p>为草图操作设置活动的视图。</p>
        </div>
      </Tooltip>
      <Highlight />
      <Step>1</Step>
    </Canvas>
  </ViewArea>
);

const ImeBar = () => (
  <Ime>
    <svg width="31" height="31" viewBox="0 0 31 31">
      <path d="M3 4L25 1q3 0 3 3l2 20q0 3-3 3L8 30q-3 0-4-3L1 8q-1-3 2-4z" fill="#f4510b" />
      <path d="M24 8C15 5 8 8 9 12c2 4 13 1 12 6-1 4-9 5-14 2" stroke="#fff" strokeWidth="4" fill="none" />
    </svg>
    <b>中</b>
    <svg width="16" height="16" viewBox="0 0 16 16" fill="#0b6fd8"><circle cx="5" cy="5" r="2" /><path d="M10 8h4v3l-3 4v-3h-1z" /></svg>
    <svg width="16" height="16" viewBox="0 0 16 16" stroke="#0b6fd8" strokeWidth="2" fill="none"><rect x="6" y="2" width="4" height="7" rx="2" fill="#0b6fd8" /><path d="M3 7c0 6 10 6 10 0M8 12v3M5 15h6" /></svg>
    <svg width="16" height="16" viewBox="0 0 16 16" stroke="#0b6fd8" strokeWidth="2" fill="none"><rect x="1" y="3" width="14" height="11" rx="2" /><path d="M4 6.500h8M4 9h8M5 11.500h6" strokeDasharray="2 1" /></svg>
    <svg width="16" height="16" viewBox="0 0 18 16">
      <defs><linearGradient id="shirt" x2="1"><stop stopColor="#35a8ff" /><stop offset="1" stopColor="#b04bf5" /></linearGradient></defs>
      <path d="M1 4l5-3q3 3 6 0l5 3-2 5h-2v6H5V9H3z" fill="url(#shirt)" />
      <circle cx="15" cy="2" r="2.5" fill="#f2463a" />
    </svg>
    <svg width="16" height="16" viewBox="0 0 16 16"><path d="M3 3q5-2 10 0 3 2 3 10-2 3-5-2H5q-3 5-5 2Q0 5 3 3z" fill="#0b6fd8" /><path d="M5 5v4M3 7h4M10 8h1M12 6h1" stroke="#fff" /></svg>
    <svg width="14" height="14" viewBox="0 0 14 14" fill="#0b6fd8"><rect width="6" height="6" rx="1" /><rect x="8" width="6" height="6" rx="3" /><rect y="8" width="6" height="6" rx="1" /><rect x="8" y="8" width="6" height="6" rx="1" /></svg>
  </Ime>
);

const Shell = styled.div`
  position: relative;
  display: flex;
  flex-direction: column;
  height: 100vh;
`;

const Header = styled.header`
  background: linear-gradient(90deg, #006088, #067ba6);
  color: #fff;
`;

const TitleRow = styled.div`
  display: flex;
  align-items: center;
  height: 26px;
`;

const QuickBar = styled.div`
  display: flex;
  align-items: center;
  width: 440px;
`;

const Logo = styled.span`
  flex: none;
  width: 41px;
  padding-left: 3px;
  font-size: 21px;
  line-height: 26px;
  font-weight: 800;
`;

const Rule = styled.i`
  flex: none;
  width: 1px;
  height: 18px;
  margin: 0 3px 0 2px;
  background: #004b6c;
`;

const QuickButton = styled.button`
  flex: none;
  display: flex;
  align-items: center;
  justify-content: center;
  gap: ${({ $gap = 8 }) => $gap}px;
  width: ${({ $width = 23 }) => $width}px;
  color: ${({ $dim }) => ($dim ? '#3486a8' : '#fff')};
  white-space: nowrap;
`;

const Title = styled.h1`
  flex: 1;
  margin: 0;
  font-size: 12px;
  font-weight: 400;
  text-align: center;
`;

const WindowControls = styled.div`
  display: flex;
  align-items: center;
  justify-content: space-between;
  width: 154px;
  padding-right: 8px;
`;

const Brand = styled.span`
  width: 76px;
  font-size: 13px;
  font-weight: 800;
`;

const TabRow = styled.nav`
  display: flex;
  align-items: center;
  height: 30px;
  font-size: 13px;
`;

const FileButton = styled.button`
  width: 82px;
  margin-right: 4px;
`;

const RibbonTab = styled.button`
  height: 28px;
  padding: 0 12px;
  border-bottom: 2px solid transparent;
  white-space: nowrap;
  ${({ $active }) => $active && css`
    color: #ffcf4d;
    border-color: #ffcf4d;
  `}
`;

const Spacer = styled.div`
  flex: 1;
`;

const SearchBox = styled.label`
  display: flex;
  align-items: center;
  width: 178px;
  height: 22px;
  padding-right: 2px;
  background: #fff;
  border: 1px solid #777;

  input {
    flex: 1;
    min-width: 0;
    padding: 0;
    border: 0;
    outline: 0;
    font-size: 11px;
  }

  input::placeholder {
    color: #aaa;
  }
`;

const HelpTools = styled.div`
  display: flex;
  align-items: center;
  gap: 10px;
  width: 162px;
  padding-left: 9px;
  font-size: 11px;

  button {
    display: flex;
    align-items: center;
    gap: 5px;
    white-space: nowrap;
  }
`;

const Alert = styled.button`
  margin-left: 4px;
  font-size: 18px;
`;

const Ribbon = styled.section`
  display: flex;
  height: 94px;
  padding-top: 5px;
  border-bottom: 1px solid #dadada;
`;

const Group = styled.div`
  display: flex;
  flex-direction: column;
  height: 84px;
  border-right: 1px solid #dadada;
`;

const GroupBody = styled.div`
  flex: 1;
  display: flex;
  gap: ${({ $gap = 4 }) => $gap}px;
  padding: 0 ${({ $end = 11 }) => $end}px 0 12px;
`;

const BigButton = styled.button`
  display: flex;
  flex-direction: column;
  align-items: center;
  align-self: flex-start;
  gap: 4px;
  min-width: 32px;
  white-space: nowrap;
`;

const SmallGrid = styled.div`
  display: grid;
  grid-template-columns: repeat(${({ $cols }) => $cols}, 33px);
  grid-auto-rows: 33px;
  row-gap: 2px;
  align-content: start;

  button {
    display: grid;
    place-items: center;
  }
`;

const MoreButton = styled.button`
  display: grid;
  place-items: center;
  height: 33px;
  width: 10px;
`;

const GroupFooter = styled.div`
  display: flex;
  align-items: center;
  height: 10px;
  color: #00628c;

  span {
    flex: 1;
    text-align: center;
  }

  button {
    display: grid;
    place-items: center;
    width: 20px;
    color: #111;
  }
`;

const BarEnd = styled.button`
  align-self: flex-end;
  margin: 0 5px 8px auto;
`;

const FilterBar = styled.section`
  display: flex;
  align-items: center;
  height: 28px;
  border-bottom: 1px solid #a8a8a8;
`;

const MenuButton = styled.button`
  display: flex;
  align-items: center;
  gap: 7px;
  width: 89px;
  padding-left: 12px;
`;

const Divider = styled.i`
  width: 1px;
  height: 20px;
  background: #dadada;
`;

const SelectWrap = styled.div`
  position: relative;
  width: ${({ $width }) => $width}px;
  margin-left: 12px;

  & + button {
    margin: 0 -6px 0 6px;
  }

  select {
    appearance: none;
    width: 100%;
    height: 22px;
    padding: 0 18px 0 2px;
    background: #fff;
    border: 1px solid #777;
    border-radius: 0;
  }

  svg {
    position: absolute;
    right: 5px;
    top: 10px;
  }
`;

const ToolSet = styled.div`
  display: flex;
  gap: 2px;
  margin: 0 6px 0 4px;
`;

const ToolToggle = styled.button`
  display: grid;
  place-items: center;
  width: 23px;
  height: 22px;
  color: ${({ $dim }) => ($dim ? '#aaa' : '#333')};
  background: ${({ $on }) => ($on ? '#cde6ea' : 'none')};
`;

const ToolMore = styled(ToolToggle)`
  width: 14px;
`;

const Workspace = styled.main`
  flex: 1;
  display: flex;
  min-height: 0;
  border-bottom: 1px solid #a8a8a8;
`;

const ResourceBar = styled.nav`
  display: flex;
  flex-direction: column;
  width: 37px;
  background: #dcdcdc;
  border-right: 1px solid #a8a8a8;
`;

const ResourceButton = styled.button`
  display: grid;
  place-items: center;
  height: ${({ $small }) => ($small ? '33px' : '44px')};
  padding: ${({ $small }) => ($small ? '0 0 4px' : '0 0 0 3px')};
  color: #4a4a4a;
  ${({ $active }) => $active && css`
    margin: 0 -1px 0 3px;
    padding: 0;
    background: #fff;
    border: 1px solid #a8a8a8;
    border-right: 0;
  `}
`;

const Panel = styled.aside`
  display: flex;
  flex-direction: column;
  width: 323px;
  padding: 0 9px 6px 8px;
  border-right: 1px solid #a8a8a8;
`;

const PanelTitle = styled.div`
  display: flex;
  align-items: center;
  height: 27px;
  padding-bottom: 2px;
  gap: 4px;
  color: #222;
  margin-left: -2px;

  h2 {
    flex: 1;
    margin: 0;
    font-size: 12px;
    font-weight: 600;
  }

  button {
    width: 12px;
    height: 11px;
    margin-right: 2px;
    border: 1px solid #000;
    border-top-width: 2px;
  }
`;

const TreeFrame = styled.div`
  flex: 1;
  display: flex;
  flex-direction: column;
  min-height: 0;
  border: 1px solid #d8d8d8;
`;

const TreeClip = styled.div`
  flex: 1;
  overflow: hidden;
`;

const TreeTable = styled.table`
  width: 100%;
  table-layout: fixed;
  border-collapse: separate;
  border-spacing: 0;
  font-size: 12px;

  th,
  td {
    height: 20px;
    padding: 0;
    border-right: 1px solid #e4e4e4;
    border-bottom: 1px solid #e4e4e4;
    line-height: 19px;
  }

  th {
    height: 21px;
    padding-left: 6px;
    background: #f0f0f0;
    border-color: #cfcfcf;
    font-weight: 400;
    text-align: left;
    white-space: nowrap;
  }

  th svg {
    display: inline-block;
    margin: 0 0 2px 18px;
  }

  td > svg {
    margin: 0 auto;
  }

  td:nth-child(2) > svg {
    margin: 0 6px;
  }

  th:last-child,
  td:last-child {
    border-right: 0;
  }
`;

const TreeRow = styled.tr`
  &:nth-child(even) {
    background: #fafafa;
  }

  ${({ $selected }) => $selected && css`
    td:first-child span,
    td:not(:first-child) {
      background: #cde6ea;
    }
  `}
`;

const tones = { pink: '#cf2bc9', dim: '#9b9b9b' };

const NameCell = styled.div`
  display: flex;
  align-items: center;
  height: 19px;
  color: ${({ $tone }) => tones[$tone] || '#1a1a1a'};
  font-weight: ${({ $tone }) => ($tone === 'bold' ? 600 : 400)};

  span {
    flex: 1;
    padding-left: 3px;
    overflow: hidden;
    white-space: nowrap;
  }
`;

const ScrollTrack = styled.div`
  height: 16px;
  padding: 7px 60px 0 17px;
  background: #f0f0f0;

  div {
    height: 2px;
    background: #858585;
  }
`;

const Splitter = styled.div`
  height: 6px;
  margin: 2px 0 1px;
  background: #dcdcdc;
  border: 1px solid #a8a8a8;
`;

const Section = styled.button`
  display: flex;
  align-items: center;
  gap: 9px;
  height: 24px;
  padding: 3px 0 0 10px;
  border-bottom: 2px solid #d0d0d0;
  color: #00628c;
  font-size: 14px;
`;

const ViewArea = styled.section`
  flex: 1;
  display: flex;
  flex-direction: column;
  min-width: 0;
`;

const FileTabs = styled.div`
  height: 27px;
  border-bottom: 2px solid #006088;
`;

const FileTab = styled.div`
  display: inline-flex;
  align-items: center;
  gap: 6px;
  height: 25px;
  padding: 0 6px;
  background: #006088;
  color: #fff;
  font-size: 12px;
`;

const Canvas = styled.div`
  position: relative;
  flex: 1;
  min-height: 0;
  background: #ccc;
`;

const Drawing = styled.svg`
  width: 100%;
  height: 100%;
`;

const MiniBar = styled.div`
  position: absolute;
  left: 766px;
  top: 235px;
  display: flex;
  align-items: center;
  width: 163px;
  height: 38px;
  padding: 0 2px;
  background: #fff;
  border: 1px solid #a8a8a8;

  button {
    display: grid;
    place-items: center;
    width: 31px;
    height: 32px;
  }
`;

const MiniActive = styled.button`
  background: #cde6ea;
`;

const ContextMenu = styled.div`
  position: absolute;
  left: 766px;
  top: 278px;
  display: flex;
  flex-direction: column;
  width: 155px;
  padding: 2px 0;
  background: #fff;
  border: 1px solid #a8a8a8;
`;

const MenuItem = styled.button`
  display: flex;
  align-items: center;
  height: 24px;
  padding: 0 8px 0 6px;
  font-weight: ${({ $bold }) => ($bold ? 700 : 400)};
  text-align: left;
  white-space: nowrap;

  > span:nth-child(2) {
    flex: 1;
  }

  kbd {
    width: 48px;
    font: inherit;
  }
`;

const MenuIcon = styled.span`
  width: 16px;
  margin-right: 6px;
`;

const SubArrow = styled.svg`
  fill: #111;
`;

const MenuRule = styled.hr`
  width: 129px;
  height: 1px;
  margin: 3px 12px 5px;
  border: 0;
  background: #dadada;
`;

const Tooltip = styled.div`
  position: absolute;
  left: 873px;
  top: 287px;
  display: flex;
  gap: 5px;
  width: 225px;
  height: 64px;
  padding: 7px;
  background: #fff;
  border: 1px solid #a8a8a8;
  font-size: 12px;
  line-height: 22px;
  white-space: nowrap;

  strong {
    display: block;
    line-height: 18px;
  }

  p {
    margin: 2px 0 0;
  }
`;

const Highlight = styled.div`
  position: absolute;
  left: 855px;
  top: 231px;
  width: 43px;
  height: 48px;
  border: 3px solid #f00;
  box-shadow: 2px 2px 4px rgba(0, 0, 0, .5), inset 2px 2px 4px rgba(0, 0, 0, .4);
`;

const Step = styled.div`
  position: absolute;
  left: 859px;
  top: 189px;
  width: 24px;
  height: 24px;
  border: 3px solid #fff;
  border-radius: 50%;
  background: #00f;
  box-shadow: 1px 2px 4px rgba(0, 0, 0, .6);
  color: #fff;
  font-size: 12px;
  font-weight: 700;
  line-height: 18px;
  text-align: center;
`;

const Status = styled.footer`
  display: grid;
  grid-template-columns: 17fr 18fr;
  height: 20px;
  padding-left: 3px;
  font-weight: 600;
  line-height: 20px;
`;

const Ime = styled.div`
  position: absolute;
  right: 1px;
  bottom: 13px;
  display: flex;
  align-items: center;
  justify-content: space-between;
  width: 199px;
  height: 26px;
  padding: 0 4px 0 0;
  background: #fff;
  border: 1px solid #b4cbe6;
  border-radius: 4px;

  b {
    color: #0b6fd8;
    font-size: 14px;
  }
`;

const Watermark = styled.div`
  position: absolute;
  right: 2px;
  bottom: 10px;
  font: 35px/48px "Liberation Sans", "Noto Sans CJK SC", sans-serif;
  color: rgba(232, 232, 232, .8);
  text-shadow: 1px 1px 1px rgba(90, 90, 90, .6);
  white-space: nowrap;
  pointer-events: none;

  span {
    font-size: 38px;
    font-weight: 300;
  }
`;

export default App;
